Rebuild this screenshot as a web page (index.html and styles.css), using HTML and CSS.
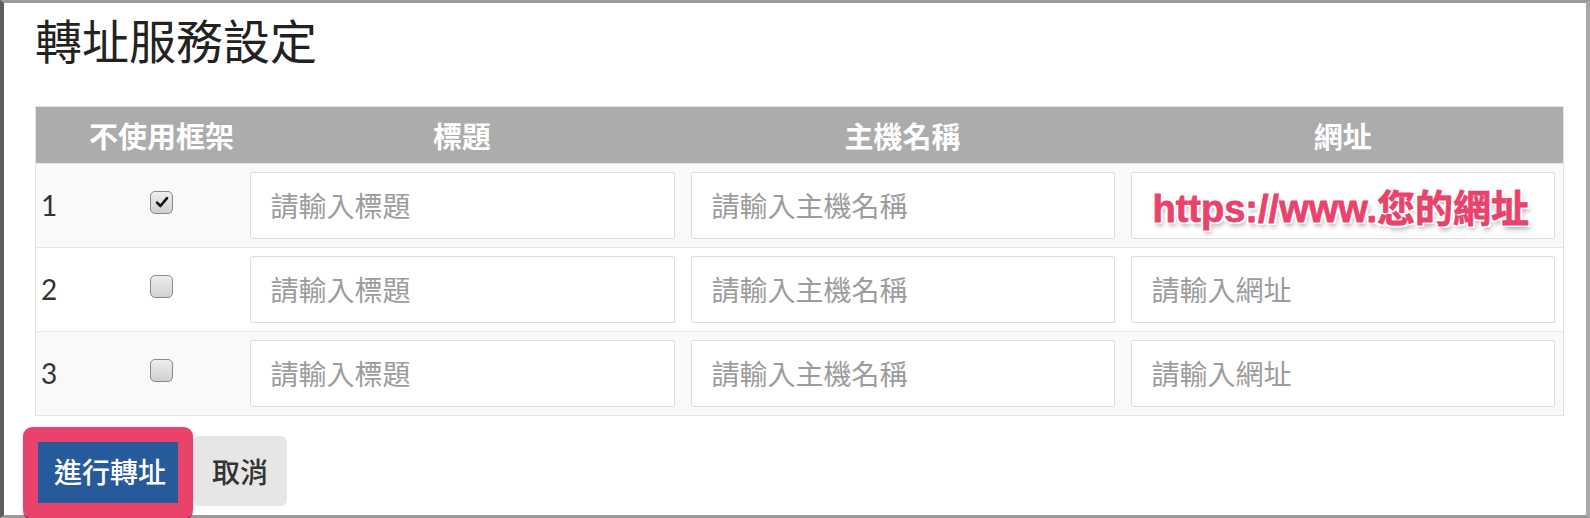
FILE: index.html
```html
<!DOCTYPE html>
<html lang="zh-Hant">
<head>
    <meta charset="UTF-8">
    <meta name="viewport" content="width=device-width, initial-scale=1.0">
    <title>轉址服務設定</title>
    <link rel="stylesheet" href="styles.css">
</head>
<body>

    <div class="frame">
        <h3 class="title">轉址服務設定</h3>

        <table class="redirects">
            <colgroup>
                <col class="c-no">
                <col class="c-frame">
                <col class="c-title">
                <col class="c-host">
                <col class="c-url">
            </colgroup>
            <thead>
                <tr>
                    <th></th>
                    <th>不使用框架</th>
                    <th>標題</th>
                    <th>主機名稱</th>
                    <th>網址</th>
                </tr>
            </thead>
            <tbody>
                <tr>
                    <td class="no">1</td>
                    <td class="frame-cell">
                        <span class="check checked">
                            <svg viewBox="0 0 16 16" width="16" height="16"><path d="M3 8.6 L6.4 12 L13 4.2" fill="none" stroke="#111" stroke-width="2.6" stroke-linecap="round" stroke-linejoin="round"/></svg>
                        </span>
                    </td>
                    <td><input class="field" type="text" placeholder="請輸入標題"></td>
                    <td><input class="field" type="text" placeholder="請輸入主機名稱"></td>
                    <td class="url-cell">
                        <input class="field" type="text">
                        <span class="note">https://www.您的網址</span>
                    </td>
                </tr>
                <tr>
                    <td class="no">2</td>
                    <td class="frame-cell"><span class="check"></span></td>
                    <td><input class="field" type="text" placeholder="請輸入標題"></td>
                    <td><input class="field" type="text" placeholder="請輸入主機名稱"></td>
                    <td><input class="field" type="text" placeholder="請輸入網址"></td>
                </tr>
                <tr>
                    <td class="no">3</td>
                    <td class="frame-cell"><span class="check"></span></td>
                    <td><input class="field" type="text" placeholder="請輸入標題"></td>
                    <td><input class="field" type="text" placeholder="請輸入主機名稱"></td>
                    <td><input class="field" type="text" placeholder="請輸入網址"></td>
                </tr>
            </tbody>
        </table>

        <div class="actions">
            <button class="btn btn-primary">進行轉址</button>
            <button class="btn btn-default">取消</button>
            <span class="mark"></span>
        </div>
    </div>

</body>
</html>
```

FILE: styles.css
```css
* { margin: 0; padding: 0; box-sizing: border-box; }
body { background: #fff; font-family: Lato, "Noto Sans CJK TC", sans-serif; color: #333; }

.frame { height: 518px; border-top: 3px solid #9a9a9a; border-left: 4px solid #5e5e5e; border-right: 4px solid #a8a8a8; border-bottom: 3px solid #9a9a9a; padding: 0 23px 0 31px; }
.title { font-family: "Noto Sans CJK TC", sans-serif; font-size: 47px; font-weight: 400; line-height: 1.1; color: #222; margin: 10px 0 41px; }

.redirects { width: 100%; border-collapse: collapse; table-layout: fixed; border: 1px solid #e4e4e4; }
.c-no { width: 46px; }
.c-frame { width: 160px; }
.c-title { width: 441px; }
.c-host { width: 440px; }
.c-url { width: 441px; }

.redirects th { background: #acacac; color: #fff; height: 57px; font-family: "Noto Sans CJK TC", sans-serif; font-size: 29px; font-weight: 700; text-align: center; }
.redirects td { padding: 8px; border-top: 1px solid #e6e6e6; vertical-align: middle; }
.redirects tbody tr:nth-child(odd) { background: #f9f9f9; }
.redirects td.no { padding-left: 5px; font-size: 28px; color: #333; }
.frame-cell { text-align: center; }

.check { display: inline-flex; align-items: center; justify-content: center; width: 23px; height: 23px; margin-bottom: 6px; vertical-align: middle; border: 1px solid #8a8a8a; border-radius: 5px; background: linear-gradient(#eeeeee, #d0d0d0); }

.field { display: block; width: 100%; height: 67px; border: 1px solid #dedede; border-radius: 2px; background: #fff; padding: 0 20px; font-family: "Noto Sans CJK TC", sans-serif; font-size: 28px; color: #555; outline: none; }
.field::placeholder { color: #9c9c9c; }

.url-cell { position: relative; }
.note { position: absolute; top: 8px; bottom: 8px; left: 8px; right: 8px; display: flex; align-items: center; padding-left: 22px; font-family: "Liberation Sans", "Noto Sans CJK TC", sans-serif; font-size: 38px; font-weight: 700; color: #e9436c; white-space: nowrap; -webkit-text-stroke: 0.8px #e9436c;
    text-shadow: 2px 0 #fff, -2px 0 #fff, 0 2px #fff, 0 -2px #fff, 2px 2px #fff, -2px -2px #fff, 2px -2px #fff, -2px 2px #fff, 2px 4px 5px rgba(0, 0, 0, 0.35); }

.actions { position: relative; display: flex; gap: 8px; margin-top: 20px; }
.btn { height: 70px; padding: 0 19px; border: none; border-radius: 6px; font-family: "Noto Sans CJK TC", sans-serif; font-size: 28px; font-weight: 500; cursor: pointer; }
.btn-primary { background: #275a9b; color: #fff; }
.btn-default { background: #e6e6e6; color: #333; }
.mark { position: absolute; left: -12px; top: -9px; width: 170px; height: 91px; border: 15px solid #e9436c; border-radius: 9px; box-shadow: 0 2px 1px #a8284c; pointer-events: none; }
```
